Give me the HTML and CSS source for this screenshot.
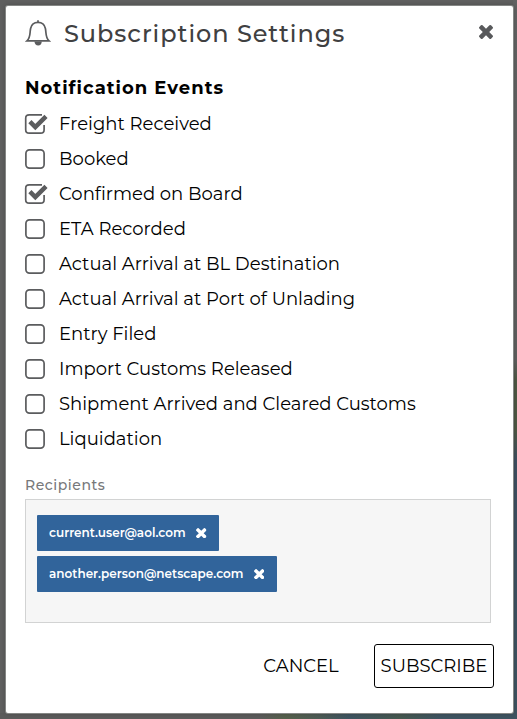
FILE: index.html
```
<!DOCTYPE html>
<html lang="en">
<head>
  <meta charset="UTF-8">
  <title>Subscription Settings</title>
  <link rel="stylesheet" href="styles.css">
</head>
<body>
  <svg class="sprite" width="0" height="0">
    <symbol id="times" viewBox="302 366 1188 1188">
      <path fill="currentColor" d="M1490 1322q0 40-28 68l-136 136q-28 28-68 28t-68-28l-294-294-294 294q-28 28-68 28t-68-28l-136-136q-28-28-28-68t28-68l294-294-294-294q-28-28-28-68t28-68l136-136q28-28 68-28t68 28l294 294 294-294q28-28 68-28t68 28l136 136q28 28 28 68t-28 68l-294 294 294 294q28 28 28 68z" />
    </symbol>
    <symbol id="box" viewBox="0 0 24 22">
      <rect x="1.9" y="1.9" width="18.2" height="18.2" rx="3.6" fill="none" stroke="currentColor" stroke-width="1.7" />
    </symbol>
    <symbol id="box-checked" viewBox="0 0 24 22">
      <path d="M18 1.8 H5.2 Q1.7 1.8 1.7 5.3 V16.7 Q1.7 20.2 5.2 20.2 H16.6 Q20.1 20.2 20.1 16.7 V12" fill="none" stroke="currentColor" stroke-width="1.7" />
      <path d="M5.9 8.7 L11.3 14 L22 3.4" fill="none" stroke="currentColor" stroke-width="4.5" />
    </symbol>
  </svg>

  <div class="modal">
    <div class="header">
      <svg class="bell" width="26" height="28" viewBox="0 0 26 28">
        <path d="M2 21.9 C5.8 18.4 4.6 14 5.6 9.5 C6.5 5.4 9 3.4 13 3.4 C17 3.4 19.5 5.4 20.4 9.5 C21.4 14 20.2 18.4 24 21.9 Z" />
        <path d="M13 1.2 V3.5" />
        <path class="clapper" d="M9.4 22.5 H16.8 Q16.5 26.5 13.2 26.5 Q10 26.5 9.4 22.5 Z" />
      </svg>
      <h1>Subscription Settings</h1>
      <button class="close" aria-label="Close"><svg><use href="#times" /></svg></button>
    </div>

    <h2>Notification Events</h2>
    <ul class="events">
      <li><svg><use href="#box-checked" /></svg>Freight Received</li>
      <li><svg><use href="#box" /></svg>Booked</li>
      <li><svg><use href="#box-checked" /></svg>Confirmed on Board</li>
      <li><svg><use href="#box" /></svg>ETA Recorded</li>
      <li><svg><use href="#box" /></svg>Actual Arrival at BL Destination</li>
      <li><svg><use href="#box" /></svg>Actual Arrival at Port of Unlading</li>
      <li><svg><use href="#box" /></svg>Entry Filed</li>
      <li><svg><use href="#box" /></svg>Import Customs Released</li>
      <li><svg><use href="#box" /></svg>Shipment Arrived and Cleared Customs</li>
      <li><svg><use href="#box" /></svg>Liquidation</li>
    </ul>

    <div class="label">Recipients</div>
    <div class="recipients">
      <div class="chip"><span>current.user@aol.com</span><svg><use href="#times" /></svg></div>
      <div class="chip"><span>another.person@netscape.com</span><svg><use href="#times" /></svg></div>
    </div>

    <div class="actions">
      <button class="cancel">CANCEL</button>
      <button class="subscribe">SUBSCRIBE</button>
    </div>
  </div>
</body>
</html>
```
FILE: styles.css
```
* {
  box-sizing: border-box;
}

body {
  margin: 0;
  height: 719px;
  padding: 6px 4px 6px 6px;
  overflow: hidden;
  font-family: Montserrat, Inter, sans-serif;
  color: #000;
  background:
    linear-gradient(90deg, #5b5b5b 0, #5b5b5b 260px, #56604c 285px, #4d5b55 320px, #3e5360 350px, #46584f 400px, #3e5360 440px, #3e5360 100%) 0 713px / 100% 6px no-repeat,
    linear-gradient(#626262 0, #5f5f5f 360px, #4e5844 380px, #4e5844 430px, #3e4e60 460px, #3e5360 100%) 513px 0 / 4px 100% no-repeat,
    #5f5f5f;
}

.sprite {
  position: absolute;
}

button {
  font-family: inherit;
  background: none;
  border: none;
  padding: 0;
  color: inherit;
}

.modal {
  height: 707px;
  padding: 11px 19px 0;
  background: #fff;
  border-radius: 2px;
  box-shadow: 0 0 0 1px #858785, 0 0 5px rgba(0, 0, 0, 0.3);
}

.header {
  display: flex;
  align-items: center;
  height: 34px;
  color: #404041;
}

.bell {
  fill: none;
  stroke: #5b5c5e;
  stroke-width: 1.7;
  margin-top: -2px;
}

.bell .clapper {
  fill: #5b5c5e;
  stroke: none;
}

h1 {
  margin: 0 0 0 13px;
  font-size: 24px;
  line-height: 34px;
  font-weight: 500;
  letter-spacing: 0.94px;
  white-space: nowrap;
}

.close {
  display: flex;
  margin: -4px 1px 0 auto;
  color: #58595b;
}

.close svg {
  width: 14px;
  height: 14px;
}

h2 {
  margin: 25px 0 6px;
  font-size: 18px;
  line-height: 24px;
  font-weight: 700;
  letter-spacing: 1px;
}

.events {
  list-style: none;
  margin: 0;
  padding: 0;
}

.events li {
  display: flex;
  align-items: center;
  gap: 11px;
  height: 35px;
  font-size: 18px;
  letter-spacing: 0.01px;
  white-space: nowrap;
}

.events svg {
  width: 24px;
  height: 22px;
  margin-left: -1px;
  color: #5b5c5e;
}

.label {
  margin-top: 19px;
  height: 24px;
  font-size: 14px;
  line-height: 20px;
  font-weight: 500;
  letter-spacing: 0.55px;
  color: #77787a;
}

.recipients {
  display: flex;
  flex-direction: column;
  align-items: flex-start;
  gap: 5px;
  width: 466px;
  height: 124px;
  padding: 15px 11px;
  background: #f6f6f6;
  border: 1px solid #d2d3d3;
}

.chip {
  display: flex;
  align-items: center;
  gap: 10.5px;
  height: 36px;
  padding: 0 12.8px 0 12px;
  border-radius: 1px;
  background: #31649b;
  color: #fff;
  font-size: 12px;
  line-height: 16px;
  font-weight: 600;
  letter-spacing: 0.01px;
  white-space: nowrap;
}

.chip svg {
  width: 10.5px;
  height: 10.5px;
}

.actions {
  display: flex;
  justify-content: flex-end;
  margin: 21px 0 0;
  height: 44px;
}

.actions button {
  font-size: 18px;
  white-space: nowrap;
}

.cancel {
  width: 84px;
  margin-right: 31px;
}

.actions .subscribe {
  width: 120px;
  border: 1px solid #000;
  border-radius: 3px;
}
```
